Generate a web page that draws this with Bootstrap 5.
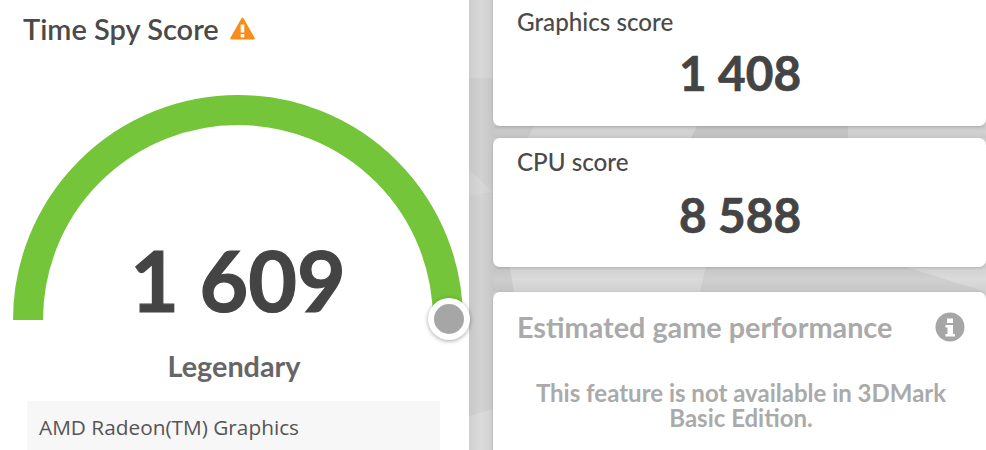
<!DOCTYPE html>
<html lang="en">
<head>
<meta charset="utf-8">
<title>Time Spy Score</title>
<link href="https://cdn.jsdelivr.net/npm/bootstrap@5.3.0/dist/css/bootstrap.min.css" rel="stylesheet">
<script src="https://cdn.jsdelivr.net/npm/bootstrap@5.3.0/dist/js/bootstrap.bundle.min.js"></script>
<style>
html,body{height:450px;overflow:hidden;background:#d2d2d2}
body{font-family:"Lato",sans-serif;color:#444}
.stage{width:986px;height:450px;overflow:hidden}
.backdrop{position:absolute;left:469px;top:0;width:517px;height:450px}
.left-panel{width:469px;height:450px;flex:none;padding-left:23px}
.panel-title{font-size:29px;line-height:32px;font-weight:600;color:#4a4a4a;padding-top:13px;height:45px;gap:11px}
.gauge{position:absolute;left:0;top:0;width:486px;height:350px;overflow:visible}
.big-score{font-size:84px;font-weight:700;line-height:90px;text-align:center;width:430px;color:#444;padding-top:190px;height:280px;box-sizing:border-box;-webkit-text-stroke:1.2px #444}
.rating{font-size:28.8px;font-weight:700;line-height:34px;color:#666;text-align:center;width:430px;margin-left:-4px;margin-top:24px}
.gpu-box{margin-left:4px;width:413px;height:60px;background:#f7f7f7;padding:13px 12px;font-family:"Open Sans",sans-serif;font-size:20.8px;line-height:27px;color:#555;margin-top:18px}
.right-col{width:493px;margin-left:24px;margin-top:-20px;position:relative}
.score-card{background:#fff;border-radius:7px;box-shadow:0 1px 3px rgba(0,0,0,.14);border:0}
.score-card.one{height:146px;padding:26px 24px 0}
.score-card.two{height:129px;padding:8px 24px 0;margin-top:12px}
.score-card.three{height:190px;padding:17px 21px 0 24px;margin-top:25px;color:#aaa}
.sub-title{font-size:24.2px;line-height:32px;font-weight:500;color:#4a4a4a}
.sub-score{font-size:47.7px;line-height:54px;font-weight:700;text-align:center;color:#444;margin-top:8px;padding-left:1px;-webkit-text-stroke:.7px #444}
.score-card.two .sub-score{margin-top:10px}
.est-title{font-size:28.8px;line-height:36px;font-weight:700;color:#aaa}
.est-text{font-size:24px;line-height:25px;font-weight:700;color:#aaa;text-align:center;margin-top:35px}
</style>
</head>
<body>
<div class="stage d-flex position-relative">
  <svg class="backdrop" viewBox="0 0 517 450" aria-hidden="true">
    <defs>
      <linearGradient id="strip" x1="0" x2="1" y1="0" y2="0"><stop offset="0" stop-color="#bdbdbd"/><stop offset=".5" stop-color="#dadada"/><stop offset="1" stop-color="#bdbdbd"/></linearGradient>
      <linearGradient id="gap" x1="0" x2="0" y1="0" y2="1"><stop offset="0" stop-color="#000" stop-opacity=".05"/><stop offset=".5" stop-color="#000" stop-opacity="0"/><stop offset="1" stop-color="#000" stop-opacity=".05"/></linearGradient>
    </defs>
    <rect width="517" height="450" fill="#d0d0d0"/>
    <rect width="24" height="78" fill="#d8d8d8"/>
    <rect y="78" width="24" height="117" fill="#cccccc"/>
    <polygon points="0,170 24,192 0,196" fill="#d6d6d6"/>
    <rect y="196" width="24" height="220" fill="#cecece"/>
    <polygon points="0,416 24,409 24,450 0,450" fill="#dcdcdc"/>
    <rect width="24" height="450" fill="url(#strip)" opacity=".4"/>
    <polygon points="24,126 65,126 59,138 24,138" fill="#cbcbcb"/>
    <polygon points="65,126 228,126 222,138 59,138" fill="#d4d4d4"/>
    <polygon points="228,126 379,126 379,138 222,138" fill="#c6c6c6"/>
    <polygon points="379,126 517,126 517,138 379,138" fill="#d2d2d2"/>
    <polygon points="24,267 41,267 45,292 24,292" fill="#cdcdcd"/>
    <polygon points="41,267 237,267 231,292 45,292" fill="#dadada"/>
    <polygon points="237,267 437,267 517,292 231,292" fill="#d0d0d0"/>
    <polygon points="437,267 517,267 517,292" fill="#dbdbdb"/>
    <rect x="24" y="267" width="493" height="25" fill="url(#gap)"/>
    <rect x="24" y="126" width="493" height="12" fill="url(#gap)"/>
  </svg>

  <div class="left-panel bg-white position-relative">
    <svg class="gauge" viewBox="0 0 486 350" aria-hidden="true">
      <path d="M28 320A210 210 0 0 1 448 320" fill="none" stroke="#74c53a" stroke-width="30"/>
      <circle cx="449" cy="319" r="21" fill="#fff" style="filter:drop-shadow(0 1px 2px rgba(0,0,0,.35))"/>
      <circle cx="449" cy="319" r="15" fill="#a6a6a6"/>
    </svg>
    <div class="panel-title d-flex align-items-center position-relative">
      <span>Time Spy Score</span>
      <svg width="25" height="24" viewBox="0 0 25 24" aria-hidden="true"><path d="M12.5 1.5 23.8 21.5H1.2Z" fill="#f98c1b" stroke="#f98c1b" stroke-width="2" stroke-linejoin="round"/><rect x="10.700" y="7.500" width="3.600" height="8" fill="#fff"/><rect x="10.700" y="17" width="3.600" height="3.400" fill="#fff"/></svg>
    </div>
    <div class="big-score position-relative">1 609</div>
    <div class="rating position-relative">Legendary</div>
    <div class="gpu-box position-relative">AMD Radeon(TM) Graphics</div>
  </div>

  <div class="right-col">
    <div class="card score-card one">
      <div class="sub-title">Graphics score</div>
      <div class="sub-score">1 408</div>
    </div>
    <div class="card score-card two">
      <div class="sub-title">CPU score</div>
      <div class="sub-score">8 588</div>
    </div>
    <div class="card score-card three">
      <div class="d-flex justify-content-between align-items-center">
        <span class="est-title">Estimated game performance</span>
        <svg width="30" height="30" viewBox="0 0 30 30" aria-hidden="true"><circle cx="15" cy="15" r="14.500" fill="#a6a6a6"/><rect x="12" y="6.500" width="6" height="4.500" fill="#fff"/><path d="M10.500 13h7.500v9h2v2.500H10.500V22h2v-6.500h-2Z" fill="#fff"/></svg>
      </div>
      <div class="est-text">This feature is not available in 3DMark Basic Edition.</div>
    </div>
  </div>
</div>
</body>
</html>
